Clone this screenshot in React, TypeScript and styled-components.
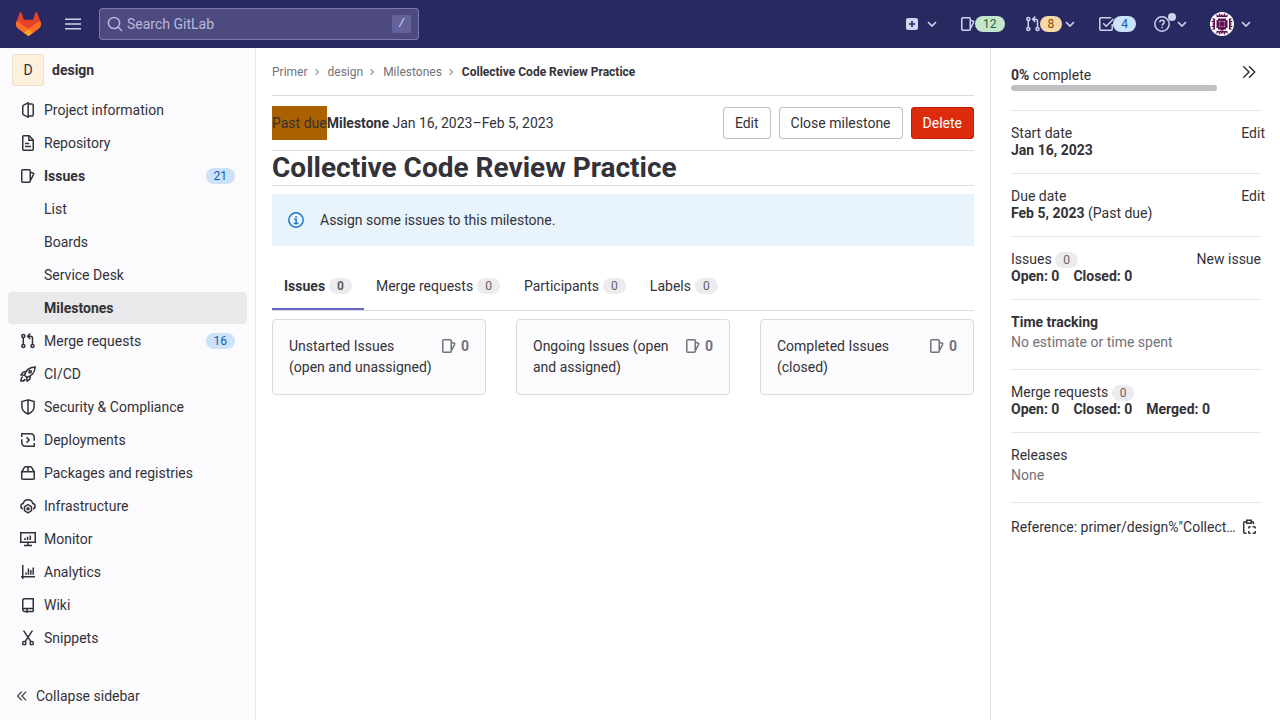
import React from "react";
import styled, { createGlobalStyle } from "styled-components";

const GlobalStyle = createGlobalStyle`
  * { box-sizing: border-box; }
  body {
    margin: 0;
    overflow: hidden;
    background: #fff;
    color: #333238;
    font: 400 14px/20px Roboto, "Noto Sans", sans-serif;
  }
  svg { display: block; flex: none; }
`;

/* ---------- icons ---------- */

const Glyph = styled.svg.attrs({ viewBox: "0 0 16 16" })<{ $size?: number }>`
  width: ${(p) => p.$size ?? 16}px;
  height: ${(p) => p.$size ?? 16}px;
  fill: none;
  stroke: currentColor;
  stroke-width: 1.5;
`;

const icons = {
  info: (
    <>
      <path d="M3.6 3.1 8.2.9v14.2l-4.6-2.2a1.4 1.4 0 0 1-.85-1.3V4.4a1.4 1.4 0 0 1 .85-1.3Z" />
      <path d="M8.2 1.9h3.5a1.5 1.5 0 0 1 1.55 1.5v9.2a1.5 1.5 0 0 1-1.55 1.5H8.2" />
    </>
  ),
  doc: (
    <>
      <path d="M2.75 1.75v12.5c0 .55.45 1 1 1h8.5c.55 0 1-.45 1-1V5l-4-4.25h-5.5c-.55 0-1 .45-1 1Z" />
      <path d="M8.9 1v4.2h4.2M5 8.6h4.2M5 11.6h6" />
    </>
  ),
  issues: (
    <>
      <rect x="1.75" y="1.75" width="8.5" height="12.5" rx="1" />
      <path d="m10.3 4.1 2.9 1.1c.5.2.7.6.5 1.1l-3.4 6.3" />
    </>
  ),
  merge: (
    <>
      <circle cx="3.3" cy="3" r="1.55" />
      <circle cx="3.3" cy="13" r="1.55" />
      <circle cx="12.5" cy="13" r="1.55" />
      <path d="M3.3 4.7v6.6M8.2 3.3h2.3a2 2 0 0 1 2 2v6M10.2.6 7.6 3.3l2.6 2.6" />
    </>
  ),
  rocket: (
    <>
      <path d="M4.6 9.2C5.5 4.4 9.5 1.3 15.1.9 14.9 6.4 11.5 10.5 6.8 11.4L4.6 9.2Z" />
      <circle cx="10.1" cy="5.8" r="1.2" />
      <path d="M5.9 5.6 3.2 6.1.9 8.9l3.7.4M10.3 10l-.4 3-2.8 2.2-.4-3.8M2.9 10.6C1.2 11.3.9 13 1 15c2 .1 3.7-.2 4.4-1.9" />
    </>
  ),
  shield: <path d="M8 .9 1.9 2.6v5.1c0 3.7 2.7 5.8 6.1 7.4 3.4-1.6 6.1-3.7 6.1-7.4V2.6L8 .9Zm0 0v14.2" />,
  deploy: (
    <>
      <path d="M1.75 5V1.75h8.5c2.4 0 4 1.6 4 4v2.9M14.25 11v3.25h-8.5c-2.4 0-4-1.6-4-4v-2.9" />
      <path d="M6.6 5.4 9.2 8l-2.6 2.6" />
    </>
  ),
  pack: <path d="M1.75 6.75v6.5c0 .55.45 1 1 1h10.5c.55 0 1-.45 1-1v-6.5L11.6 2.4a1.3 1.3 0 0 0-1.1-.65h-5a1.3 1.3 0 0 0-1.1.65L1.75 6.75h12.5M8 1.75v5" />,
  cloud: (
    <>
      <path d="M3 10.9A2.7 2.7 0 0 1 3.2 5.6C3.8 3.2 5.6 1.75 8 1.75s4.2 1.45 4.8 3.85a2.7 2.7 0 0 1 .2 5.3" />
      <path d="m8 6.6 3.5 2v4.1L8 14.8l-3.5-2.1V8.6l3.5-2Z" />
      <circle cx="8" cy="10.7" r="1" />
    </>
  ),
  monitor: <path d="M.75 1.75h14.5v9.5H.75v-9.5ZM8 11.5v3M4 14.5h8M5 7v2M7.6 5.7V9M10.3 4.5V9" />,
  chart: <path d="M2.75 1v14M1 12.75h14M6 8.6v2.2M8.4 4.4v6.4M10.8 6v4.8M13.2 3.4v7.4" />,
  book: (
    <>
      <path d="M13.25 11.5V1.75h-9a1.5 1.5 0 0 0-1.5 1.5v9.5M13.25 11.6h-9a1.4 1.4 0 0 0 0 2.8h9" />
      <path d="M7.1 11.5V16M13.25 11.5v3" />
    </>
  ),
  snip: (
    <>
      <circle cx="4.3" cy="13.2" r="1.65" />
      <circle cx="11.7" cy="13.2" r="1.65" />
      <path d="M3.6.7 10.9 11.7M12.4.7 5.1 11.7" />
    </>
  ),
  todo: (
    <>
      <path d="M14.2 8v5.2c0 .6-.4 1-1 1H2.8c-.6 0-1-.4-1-1V2.8c0-.6.4-1 1-1h10.4" />
      <path d="m5.2 7.2 3 3L15.5 3" />
    </>
  ),
  help: (
    <>
      <circle cx="8" cy="8" r="7.2" />
      <path d="M5.8 6.3c.1-1.2 1-2 2.2-2s2.2.8 2.2 1.9c0 1.6-2.1 1.7-2.1 3.4M8.1 10.8v1.5" />
    </>
  ),
  search: (
    <>
      <circle cx="7" cy="7" r="5.6" />
      <path d="m11 11 4 4" />
    </>
  ),
  burger: <path d="M0 3.2h16M0 8h16M0 12.8h16" />,
  notice: (
    <>
      <circle cx="8" cy="8" r="7.2" />
      <path d="M6.2 7.3h1.9v4.3M5.8 11.6h4.6M7.2 4.9h1.7" />
    </>
  ),
  left: <path d="M7.7 2.3 2.2 8l5.5 5.7M13.4 2.3 7.9 8l5.5 5.7" />,
  right: <path d="m2.3 2.3 5.7 5.7-5.7 5.7M8 2.3 13.7 8 8 13.7" />,
  clip: (
    <>
      <path d="M5.5 2.75H3.7a1 1 0 0 0-1 1v9.5a1 1 0 0 0 1 1h1.8M10.5 2.75h1a1 1 0 0 1 1 1v1.5M5.75 1.2h4.5v3.1h-4.5Z" />
      <path d="M9.6 7.75H8.5a.75.75 0 0 0-.75.75v1.1M11.6 7.75h1.9a.75.75 0 0 1 .75.75v1.1M7.75 12.1v1.4c0 .41.34.75.75.75h1.1M11.6 14.25h1.9c.41 0 .75-.34.75-.75v-1.4" />
    </>
  ),
};

type IconName = keyof typeof icons;

const Icon = ({ name, size }: { name: IconName; size?: number }) => (
  <Glyph $size={size}>{icons[name]}</Glyph>
);

const Chevron = () => (
  <svg width="10" height="10" fill="none" stroke="currentColor" strokeWidth="1.6">
    <path d="m1 3 4 4 4-4" />
  </svg>
);

const Logo = () => (
  <svg width="25" height="24" viewBox="0 0 25 24">
    <path d="m24.507 9.5-.034-.09L21.082.562a.896.896 0 0 0-1.694.091l-2.29 7.01H7.825L5.535.653a.898.898 0 0 0-1.694-.09L.451 9.411.416 9.5a6.297 6.297 0 0 0 2.09 7.278l.012.01.03.022 5.16 3.867 2.56 1.935 1.554 1.176a1.051 1.051 0 0 0 1.268 0l1.555-1.176 2.56-1.935 5.197-3.89.014-.01A6.297 6.297 0 0 0 24.507 9.5Z" fill="#E24329" />
    <path d="m24.507 9.5-.034-.09a11.44 11.44 0 0 0-4.56 2.051l-7.447 5.632 4.742 3.584 5.197-3.89.014-.01A6.297 6.297 0 0 0 24.507 9.5Z" fill="#FC6D26" />
    <path d="m7.707 20.677 2.56 1.935 1.555 1.176a1.051 1.051 0 0 0 1.268 0l1.555-1.176 2.56-1.935-4.743-3.584-4.755 3.584Z" fill="#FCA326" />
    <path d="M5.01 11.461a11.43 11.43 0 0 0-4.56-2.05L.416 9.5a6.297 6.297 0 0 0 2.09 7.278l.012.01.03.022 5.16 3.867 4.745-3.584-7.444-5.632Z" fill="#FC6D26" />
  </svg>
);

const Identicon = () => (
  <svg width="24" height="24" viewBox="0 0 24 24">
    <circle cx="12" cy="12" r="12" fill="#fff" />
    <g fill="#5c1050">
      <path d="M8 6.5h8v1.4h1.5v8.2H16v1.4h-2.4v1h-3.2v-1H8v-1.4H6.5V7.9H8Z" />
      {[0, 90, 180, 270].map((turn) => (
        <path key={turn} transform={`rotate(${turn} 12 12)`} d="M6.4 1.6 8.2 4 9.6 1l1.3 3L12 1.6 13.1 4l1.3-3 1.4 3 1.8-2.4-.2 3.6-2-.2H8.6l-2 .2Z" />
      ))}
    </g>
    <path d="M9.6 8.4v7.2M14.4 8.4v7.2M8.4 9.6h7.2M8.4 14.4h7.2" stroke="#fff" strokeWidth=".6" opacity=".55" />
  </svg>
);

/* ---------- top bar ---------- */

const TopBar = styled.header`
  display: flex;
  align-items: center;
  height: 48px;
  padding: 0 29px 0 16px;
  background: #292961;
  color: #d1d1f0;
`;

const MenuButton = styled.div`
  margin: 0 18px 0 24px;
`;

const SearchBox = styled.div`
  display: flex;
  align-items: center;
  gap: 4px;
  width: 320px;
  height: 32px;
  padding: 0 8px;
  border-radius: 4px;
  background: #4d4a80;
  box-shadow: inset 0 0 0 1px #7a78ac;
  color: #b9b8de;
`;

const SlashKey = styled.kbd`
  width: 19px;
  margin-left: auto;
  border-radius: 2px;
  background: #64629a;
  color: #d1d1f0;
  font: 12px/18px "Liberation Mono", monospace;
  text-align: center;
`;

const TopTools = styled.nav`
  display: flex;
  align-items: center;
  margin-left: auto;
`;

const Tool = styled.div<{ $before?: number; $gap?: number }>`
  position: relative;
  display: flex;
  align-items: center;
  gap: ${(p) => p.$gap ?? 0}px;
  margin-left: ${(p) => p.$before ?? 0}px;
`;

const tones = {
  green: "background: #c3e6cd; color: #24663b;",
  orange: "background: #f5d9a8; color: #8f4700;",
  blue: "background: #cbe2f9; color: #0b5cad;",
  muted: "background: #ececef; color: #626168;",
};

const Badge = styled.span<{ $tone: keyof typeof tones; $bold?: boolean }>`
  display: inline-block;
  height: 16px;
  padding: 0 8px;
  border-radius: 8px;
  font-size: 12px;
  line-height: 16px;
  font-weight: ${(p) => (p.$bold ? 700 : 400)};
  ${(p) => tones[p.$tone]}
`;

const ToolBadge = styled(Badge)`
  position: relative;
  margin-left: -1px;
`;

const ToolChevron = styled.span<{ $before: number }>`
  margin-left: ${(p) => p.$before}px;
`;

const HelpDot = styled.i`
  position: absolute;
  top: -3px;
  left: 14px;
  width: 8px;
  height: 8px;
  border-radius: 50%;
  background: #d1d1f0;
`;

/* ---------- page frame ---------- */

const Page = styled.div`
  display: grid;
  grid-template-columns: 256px 734px 290px;
  height: 672px;
`;

/* ---------- left sidebar ---------- */

const Sidebar = styled.aside`
  display: flex;
  flex-direction: column;
  border-right: 1px solid #e6e6ea;
  background: #fbfafd;
`;

const Project = styled.div`
  display: flex;
  align-items: center;
  gap: 8px;
  height: 46px;
  padding: 0 12px 2px;
  font-weight: 700;
`;

const ProjectAvatar = styled.div`
  width: 32px;
  height: 32px;
  border-radius: 4px;
  background: #fdf1dd;
  box-shadow: inset 0 0 0 1px #ecdfcd;
  font-weight: 400;
  line-height: 32px;
  text-align: center;
`;

const NavRow = styled.a<{ $active?: boolean; $bold?: boolean }>`
  display: flex;
  align-items: center;
  height: 32px;
  margin: 0 8px 1px;
  padding: 0 12px;
  border-radius: 4px;
  background: ${(p) => (p.$active ? "#e9e8eb" : "transparent")};
  font-weight: ${(p) => (p.$bold ? 700 : 400)};
`;

const NavLabel = styled.span<{ $nested?: boolean }>`
  margin-left: ${(p) => (p.$nested ? 24 : 8)}px;
`;

const NavBadge = styled(Badge)`
  margin-left: auto;
`;

const Collapse = styled.div`
  display: flex;
  align-items: center;
  gap: 8px;
  height: 48px;
  margin-top: auto;
  padding-left: 16px;
`;

type NavItem = { label: string; icon?: IconName; count?: number; active?: boolean; bold?: boolean };

const navItems: NavItem[] = [
  { label: "Project information", icon: "info" },
  { label: "Repository", icon: "doc" },
  { label: "Issues", icon: "issues", count: 21, bold: true },
  { label: "List" },
  { label: "Boards" },
  { label: "Service Desk" },
  { label: "Milestones", active: true, bold: true },
  { label: "Merge requests", icon: "merge", count: 16 },
  { label: "CI/CD", icon: "rocket" },
  { label: "Security & Compliance", icon: "shield" },
  { label: "Deployments", icon: "deploy" },
  { label: "Packages and registries", icon: "pack" },
  { label: "Infrastructure", icon: "cloud" },
  { label: "Monitor", icon: "monitor" },
  { label: "Analytics", icon: "chart" },
  { label: "Wiki", icon: "book" },
  { label: "Snippets", icon: "snip" },
];

/* ---------- main column ---------- */

const Main = styled.main`
  padding: 0 16px;
`;

const Breadcrumbs = styled.nav`
  display: flex;
  align-items: center;
  height: 48px;
  border-bottom: 1px solid #dcdcde;
  color: #737278;
  font-size: 12px;
`;

const CurrentCrumb = styled.b`
  color: #333238;
`;

const Separator = styled.span`
  padding: 0 7px 0 5px;
  color: #a4a3a8;
`;

const MilestoneBar = styled.div`
  display: flex;
  align-items: center;
  height: 55px;
  border-bottom: 1px solid #dcdcde;
`;

const PastDue = styled.span`
  background: #ab6100;
  line-height: 34px;
`;

const Actions = styled.div`
  display: flex;
  gap: 8px;
  margin-left: auto;
`;

const Button = styled.button<{ $danger?: boolean }>`
  height: 32px;
  padding: 0 12px;
  border: 0;
  border-radius: 4px;
  background: ${(p) => (p.$danger ? "#dd2b0e" : "#fff")};
  box-shadow: inset 0 0 0 1px ${(p) => (p.$danger ? "#c02008" : "#bfbfc3")};
  color: ${(p) => (p.$danger ? "#fff" : "#333238")};
  font: inherit;
`;

const Title = styled.h2`
  height: 35px;
  margin: 0;
  border-bottom: 1px solid #dcdcde;
  font-size: 28px;
  font-weight: 700;
  line-height: 34px;
`;

const Alert = styled.div`
  display: flex;
  align-items: center;
  gap: 16px;
  height: 52px;
  margin-top: 8px;
  padding: 0 16px;
  background: #e9f3fc;

  svg { color: #1f75cb; }
`;

const Tabs = styled.div`
  display: flex;
  height: 49px;
  margin-top: 16px;
  border-bottom: 1px solid #dcdcde;
`;

const Tab = styled.div<{ $active?: boolean }>`
  display: flex;
  align-items: center;
  gap: 4px;
  height: 48px;
  padding: 0 12px;
  box-shadow: ${(p) => (p.$active ? "inset 0 -2px 0 #6666c4" : "none")};
  font-weight: ${(p) => (p.$active ? 700 : 400)};
`;

const Columns = styled.div`
  display: grid;
  grid-template-columns: repeat(3, 1fr);
  gap: 30px;
  margin-top: 8px;
`;

const Card = styled.section`
  display: flex;
  justify-content: space-between;
  height: 76px;
  padding: 16px;
  border: 1px solid #dcdcde;
  border-radius: 4px;
  background: #fbfafd;
  line-height: 21px;
  white-space: pre-line;
`;

const CardCount = styled.span`
  display: flex;
  align-items: center;
  gap: 4px;
  height: 20px;
  color: #737278;
  font-weight: 700;
`;

/* ---------- right sidebar ---------- */

const Details = styled.aside`
  padding: 0 19px 0 20px;
  border-left: 1px solid #dcdcde;
`;

const Block = styled.section<{ $height?: number; $roomy?: boolean }>`
  height: ${(p) => p.$height ?? 63}px;
  padding-top: ${(p) => (p.$roomy ? 12 : 14)}px;
  border-bottom: 1px solid #e4e4e7;
  line-height: ${(p) => (p.$roomy ? 20 : 17)}px;
`;

const ProgressBlock = styled(Block)`
  display: flex;
  justify-content: space-between;
  padding: 16px 4px 0 0;
`;

const Progress = styled.div`
  padding-top: 3px;
`;

const Track = styled.div`
  width: 206px;
  height: 6px;
  margin-top: 1px;
  border-radius: 3px;
  background: #bfbfc3;
`;

const Line = styled.div<{ $outset?: boolean }>`
  display: flex;
  justify-content: space-between;
  margin-right: ${(p) => (p.$outset ? -4 : 0)}px;
`;

const Heading = styled.span`
  display: flex;
  align-items: center;
  gap: 3.5px;
  height: 17px;
`;

const Counts = styled.div`
  display: flex;
  gap: 14px;
  font-weight: 700;
`;

const Muted = styled.div`
  color: #737278;
`;

const Reference = styled.div`
  display: flex;
  align-items: center;
  justify-content: space-between;
  padding: 14px 4px 0 0;
  white-space: nowrap;
`;

const Crumb = ({ children }: { children: string }) => (
  <>
    {children}
    <Separator>
      <svg width="8" height="8" fill="none" stroke="currentColor" strokeWidth="1.4">
        <path d="m2.5 1.2 3 2.8-3 2.8" />
      </svg>
    </Separator>
  </>
);

export default function App() {
  return (
    <>
      <GlobalStyle />
      <TopBar>
        <Logo />
        <MenuButton><Icon name="burger" /></MenuButton>
        <SearchBox>
          <Icon name="search" />
          Search GitLab
          <SlashKey>/</SlashKey>
        </SearchBox>
        <TopTools>
          <Tool $gap={9}>
            <svg width="12" height="12">
              <rect width="12" height="12" rx="2" fill="#d1d1f0" />
              <path d="M6 3v6M3 6h6" stroke="#292961" strokeWidth="1.6" />
            </svg>
            <Chevron />
          </Tool>
          <Tool $before={23}>
            <Icon name="issues" />
            <ToolBadge $tone="green">12</ToolBadge>
          </Tool>
          <Tool $before={20}>
            <Icon name="merge" />
            <ToolBadge $tone="orange">8</ToolBadge>
            <ToolChevron $before={3}><Chevron /></ToolChevron>
          </Tool>
          <Tool $before={23}>
            <Icon name="todo" />
            <ToolBadge $tone="blue">4</ToolBadge>
          </Tool>
          <Tool $before={18} $gap={7}>
            <Icon name="help" />
            <HelpDot />
            <Chevron />
          </Tool>
          <Tool $before={23} $gap={7}>
            <Identicon />
            <Chevron />
          </Tool>
        </TopTools>
      </TopBar>

      <Page>
        <Sidebar>
          <Project>
            <ProjectAvatar>D</ProjectAvatar>
            design
          </Project>
          {navItems.map((item) => (
            <NavRow key={item.label} $active={item.active} $bold={item.bold}>
              {item.icon && <Icon name={item.icon} />}
              <NavLabel $nested={!item.icon}>{item.label}</NavLabel>
              {item.count && <NavBadge $tone="blue">{item.count}</NavBadge>}
            </NavRow>
          ))}
          <Collapse>
            <Icon name="left" size={12} />
            Collapse sidebar
          </Collapse>
        </Sidebar>

        <Main>
          <Breadcrumbs>
            <Crumb>Primer</Crumb>
            <Crumb>design</Crumb>
            <Crumb>Milestones</Crumb>
            <CurrentCrumb>Collective Code Review Practice</CurrentCrumb>
          </Breadcrumbs>
          <MilestoneBar>
            <PastDue>Past due</PastDue>
            <span><b>Milestone</b> Jan 16, 2023–Feb 5, 2023</span>
            <Actions>
              <Button>Edit</Button>
              <Button>Close milestone</Button>
              <Button $danger>Delete</Button>
            </Actions>
          </MilestoneBar>
          <Title>Collective Code Review Practice</Title>
          <Alert>
            <Icon name="notice" />
            Assign some issues to this milestone.
          </Alert>
          <Tabs>
            {["Issues", "Merge requests", "Participants", "Labels"].map((label, i) => (
              <Tab key={label} $active={i === 0}>
                {label}
                <Badge $tone="muted" $bold={i === 0}>0</Badge>
              </Tab>
            ))}
          </Tabs>
          <Columns>
            {[
              "Unstarted Issues\n(open and unassigned)",
              "Ongoing Issues (open\nand assigned)",
              "Completed Issues\n(closed)",
            ].map((label) => (
              <Card key={label}>
                {label}
                <CardCount><Icon name="issues" />0</CardCount>
              </Card>
            ))}
          </Columns>
        </Main>

        <Details>
          <ProgressBlock>
            <Progress>
              <div><b>0%</b> complete</div>
              <Track />
            </Progress>
            <Icon name="right" />
          </ProgressBlock>
          <Block>
            <Line $outset><span>Start date</span><span>Edit</span></Line>
            <b>Jan 16, 2023</b>
          </Block>
          <Block>
            <Line $outset><span>Due date</span><span>Edit</span></Line>
            <b>Feb 5, 2023</b> (Past due)
          </Block>
          <Block>
            <Line>
              <Heading>Issues <Badge $tone="muted">0</Badge></Heading>
              <span>New issue</span>
            </Line>
            <Counts><span>Open: 0</span><span>Closed: 0</span></Counts>
          </Block>
          <Block $height={70} $roomy>
            <b>Time tracking</b>
            <Muted>No estimate or time spent</Muted>
          </Block>
          <Block>
            <Heading>Merge requests <Badge $tone="muted">0</Badge></Heading>
            <Counts><span>Open: 0</span><span>Closed: 0</span><span>Merged: 0</span></Counts>
          </Block>
          <Block $height={70} $roomy>
            Releases
            <Muted>None</Muted>
          </Block>
          <Reference>
            <span>Reference: primer/design%"Collect…</span>
            <Icon name="clip" />
          </Reference>
        </Details>
      </Page>
    </>
  );
}
